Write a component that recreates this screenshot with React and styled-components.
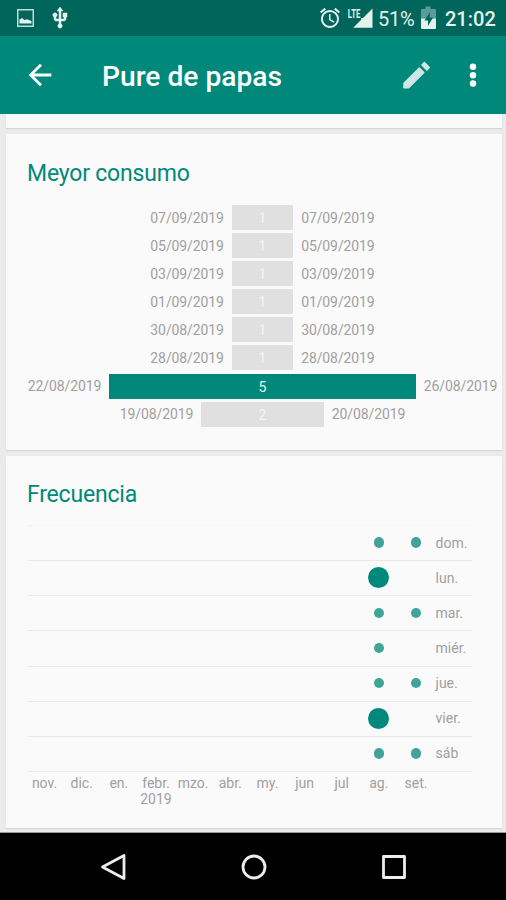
import React from 'react';
import styled, {createGlobalStyle} from 'styled-components';

const GlobalStyle = createGlobalStyle`
	body {
		margin: 0;
		background-color: #ebebeb;
		font-family: Roboto, sans-serif;
	}
`;

const Page = styled.div`
	display: flex;
	flex-direction: column;
	width: 506px;
	height: 900px;
	overflow: hidden;
	background-color: #ebebeb;
`;

const StatusBar = styled.div`
	display: flex;
	align-items: center;
	box-sizing: border-box;
	flex: none;
	height: 36px;
	padding: 0 11px 0 16px;
	background-color: #00665b;
	color: #e3f1ef;
`;

const StatusIcon = styled.svg`
	flex: none;
	display: block;
	margin-left: ${props => props.$gap || 0}px;
	fill: #e3f1ef;
`;

const Spacer = styled.div`
	flex: 1;
`;

const Percent = styled.span`
	margin: 2px 0 0 5px;
	width: 37px;
	font-size: 20px;
	letter-spacing: -0.2px;
	white-space: nowrap;
`;

const Clock = styled.span`
	margin: 2px 0 0 8px;
	width: 50px;
	font-size: 20px;
	font-weight: 500;
	white-space: nowrap;
`;

const AppBar = styled.div`
	display: flex;
	align-items: center;
	box-sizing: border-box;
	flex: none;
	height: 78px;
	padding: 0 15px 0 23px;
	background-color: #00897b;
`;

const BarIcon = styled.svg`
	flex: none;
	display: block;
	margin-left: ${props => props.$gap || 0}px;
	fill: #fff;
	opacity: ${props => (props.$faded ? 0.8 : 1)};
`;

const Title = styled.h1`
	flex: 1;
	margin: 3px 0 0 45px;
	color: #fff;
	font-size: 28.2px;
	font-weight: 500;
	line-height: 34px;
`;

const Content = styled.div`
	display: flex;
	flex-direction: column;
	box-sizing: border-box;
	flex: none;
	gap: 6px;
	height: 719px;
	padding: 0 4px 5px 6px;
	border-bottom: 1px solid #999;
`;

const Card = styled.div`
	box-sizing: border-box;
	flex: none;
	height: ${props => props.$height}px;
	padding-left: 22px;
	background-color: #fafafa;
	box-shadow: 0 1px 1px #d6d6d6;
`;

const H2 = styled.h2`
	margin: 0 0 0 -1px;
	padding-top: ${props => props.$top}px;
	color: #00897b;
	font-size: 23px;
	font-weight: 400;
	letter-spacing: -0.2px;
	line-height: 28px;
`;

const Streaks = styled.div`
	display: flex;
	flex-direction: column;
	width: 469px;
	margin-top: 17px;
	gap: 3.1px;
`;

const Streak = styled.div`
	display: flex;
	justify-content: center;
	align-items: center;
	gap: 8px;
	height: 25px;
`;

const StreakDate = styled.span`
	flex: none;
	color: #a0a0a0;
	font-size: 14px;
	letter-spacing: -0.1px;
`;

const StreakBar = styled.div`
	flex: none;
	height: 25px;
	background-color: ${props => (props.$best ? '#00897b' : '#e0e0e0')};
	color: ${props => (props.$best ? '#e8f5f3' : '#f4f4f4')};
	font-size: 14px;
	line-height: 26px;
	text-align: center;
`;

const Grid = styled.div`
	width: 444px;
	margin-top: 16px;
	border-top: 1px solid #f3f3f3;
`;

const Day = styled.div`
	display: flex;
	align-items: center;
	box-sizing: border-box;
	height: 35.15px;
	padding-bottom: 1px;
	border-bottom: 1px solid #e9e9e9;
`;

const Cells = styled.div`
	display: grid;
	grid-template-columns: repeat(11, 37.15px);
	flex: none;
	margin-left: -2px;
`;

const Cell = styled.div`
	display: flex;
	justify-content: center;
	align-items: center;
	height: 33px;
`;

const Dot = styled.div`
	width: ${props => (props.$big ? 21 : 10.5)}px;
	height: ${props => (props.$big ? 21 : 10.5)}px;
	border-radius: 50%;
	background-color: ${props => (props.$big ? '#00897b' : '#40a598')};
`;

const DayName = styled.span`
	margin-left: 1px;
	color: #a0a0a0;
	font-size: 14px;
`;

const Month = styled.div`
	padding-top: 3px;
	color: #a0a0a0;
	font-size: 14px;
	line-height: 16px;
	text-align: center;
`;

const NavBar = styled.div`
	display: flex;
	justify-content: center;
	align-items: center;
	flex: 1;
	gap: 112.5px;
	padding-left: 1px;
	background-color: #000;
`;

const NavIcon = styled.svg`
	display: block;
	fill: none;
	stroke: #ededed;
	stroke-width: 2.8;
	stroke-linejoin: round;
`;

const streaks = [
	{from: '07/09/2019', to: '07/09/2019', days: 1},
	{from: '05/09/2019', to: '05/09/2019', days: 1},
	{from: '03/09/2019', to: '03/09/2019', days: 1},
	{from: '01/09/2019', to: '01/09/2019', days: 1},
	{from: '30/08/2019', to: '30/08/2019', days: 1},
	{from: '28/08/2019', to: '28/08/2019', days: 1},
	{from: '22/08/2019', to: '26/08/2019', days: 5},
	{from: '19/08/2019', to: '20/08/2019', days: 2},
];

const months = ['nov.', 'dic.', 'en.', 'febr.', 'mzo.', 'abr.', 'my.', 'jun', 'jul', 'ag.', 'set.'];

// counts for august and september
const days = [
	{name: 'dom.', counts: [1, 1]},
	{name: 'lun.', counts: [2, 0]},
	{name: 'mar.', counts: [1, 1]},
	{name: 'miér.', counts: [1, 0]},
	{name: 'jue.', counts: [1, 1]},
	{name: 'vier.', counts: [2, 0]},
	{name: 'sáb', counts: [1, 1]},
];

function Status() {
	return (
		<StatusBar>
			<StatusIcon width="19" height="20" viewBox="0 0 19 20">
				<path opacity="0.85" fillRule="evenodd" d="M1 1h17v18H1zM2.5 2.5v15h14v-15z"/>
				<path d="M3.5 15.5v-4l2.500-1.500 2.500 2 2.500-.7 2 .7 2.500 1v2.500z"/>
			</StatusIcon>
			<StatusIcon $gap={13} width="24" height="24" viewBox="0 0 24 24">
				<path stroke="#e3f1ef" strokeWidth="0.5" d="M15 7v4h1v2h-3V5h2l-3-4-3 4h2v8H8v-2.070c.7-.37 1.200-1.080 1.200-1.930 0-1.210-.99-2.200-2.200-2.200S4.800 7.790 4.800 9c0 .85.5 1.560 1.200 1.930V13c0 1.110.89 2 2 2h3v3.050c-.71.37-1.200 1.100-1.200 1.950 0 1.220.99 2.200 2.200 2.200s2.200-.98 2.200-2.200c0-.85-.49-1.580-1.200-1.950V15h3c1.110 0 2-.89 2-2v-2h1V7h-4z"/>
			</StatusIcon>
			<Spacer/>
			<StatusIcon width="24" height="24" viewBox="0 0 24 24">
				<path d="M22 5.720l-4.600-3.860-1.290 1.530 4.600 3.860L22 5.720zM7.880 3.390L6.600 1.860 2 5.710l1.290 1.530 4.590-3.850zM12.500 8H11v6l4.750 2.850.75-1.230-4-2.370V8zM12 4c-4.970 0-9 4.030-9 9s4.020 9 9 9a9 9 0 0 0 0-18zm0 16c-3.870 0-7-3.130-7-7s3.130-7 7-7 7 3.130 7 7-3.130 7-7 7z"/>
			</StatusIcon>
			<StatusIcon $gap={5} width="26" height="22" viewBox="0 0 26 22">
				<path d="M25.500 1.500v19.300H6.200l8-8V11h1.800z"/>
				<text x="0.8" y="11" fontSize="13" fontWeight="700" textLength="12.500" lengthAdjust="spacingAndGlyphs">LTE</text>
			</StatusIcon>
			<Percent>51%</Percent>
			<StatusIcon $gap={5} width="17" height="24" viewBox="0 0 17 24">
				<path opacity="0.4" d="M5.500.5h5V3H15q1 0 1 1v8.500H1V4q0-1 1-1h3.500z"/>
				<path d="M1 12.500h15V22q0 1-1 1H2q-1 0-1-1z"/>
				<path fill="#00665b" d="M10 6l-5.500 8.500H8V20l5-8.500H9.500z"/>
			</StatusIcon>
			<Clock>21:02</Clock>
		</StatusBar>
	);
}

function Header() {
	return (
		<AppBar>
			<BarIcon width="34" height="34" viewBox="0 0 24 24">
				<path d="M20 11H7.830l5.590-5.590L12 4l-8 8 8 8 1.410-1.410L7.830 13H20v-2z"/>
			</BarIcon>
			<Title>Pure de papas</Title>
			<BarIcon $faded width="36" height="36" viewBox="0 0 36 36">
				<g stroke="#fff" strokeWidth="1.600" strokeLinejoin="round">
					<path d="M5 26.200L20.300 11l4.500 4.500L9.600 30.700H5z"/>
					<path d="M23 8l2.400-2.400 4.900 4.900-2.400 2.400z"/>
				</g>
			</BarIcon>
			<BarIcon $gap={20} width="36" height="36" viewBox="0 0 36 36">
				<circle cx="18" cy="9.800" r="3.200"/>
				<circle cx="18" cy="18.200" r="3.200"/>
				<circle cx="18" cy="26.500" r="3.200"/>
			</BarIcon>
		</AppBar>
	);
}

function BestStreaks() {
	return (
		<Card $height={316}>
			<H2 $top={26}>Meyor consumo</H2>
			<Streaks>
				{streaks.map(s => (
					<Streak key={s.from}>
						<StreakDate>{s.from}</StreakDate>
						<StreakBar $best={s.days === 5} style={{width: s.days * 61.3}}>{s.days}</StreakBar>
						<StreakDate>{s.to}</StreakDate>
					</Streak>
				))}
			</Streaks>
		</Card>
	);
}

function Frequency() {
	return (
		<Card $height={372}>
			<H2 $top={25}>Frecuencia</H2>
			<Grid>
				{days.map(day => (
					<Day key={day.name}>
						<Cells>
							{months.map((month, i) => {
								const count = day.counts[i - 9];
								return <Cell key={month}>{count > 0 && <Dot $big={count > 1}/>}</Cell>;
							})}
						</Cells>
						<DayName>{day.name}</DayName>
					</Day>
				))}
			</Grid>
			<Cells>
				{months.map(month => (
					<Month key={month}>
						{month}
						{month === 'febr.' && <div>2019</div>}
					</Month>
				))}
			</Cells>
		</Card>
	);
}

export default function App() {
	return (
		<Page>
			<GlobalStyle/>
			<Status/>
			<Header/>
			<Content>
				<Card $height={14}/>
				<BestStreaks/>
				<Frequency/>
			</Content>
			<NavBar>
				<NavIcon width="28" height="28" viewBox="0 0 28 28">
					<path d="M25 2.500v23L3.500 14z"/>
				</NavIcon>
				<NavIcon width="28" height="28" viewBox="0 0 28 28">
					<circle cx="14" cy="14" r="11"/>
				</NavIcon>
				<NavIcon width="28" height="28" viewBox="0 0 28 28">
					<rect x="3.500" y="3.500" width="21" height="21"/>
				</NavIcon>
			</NavBar>
		</Page>
	);
}
